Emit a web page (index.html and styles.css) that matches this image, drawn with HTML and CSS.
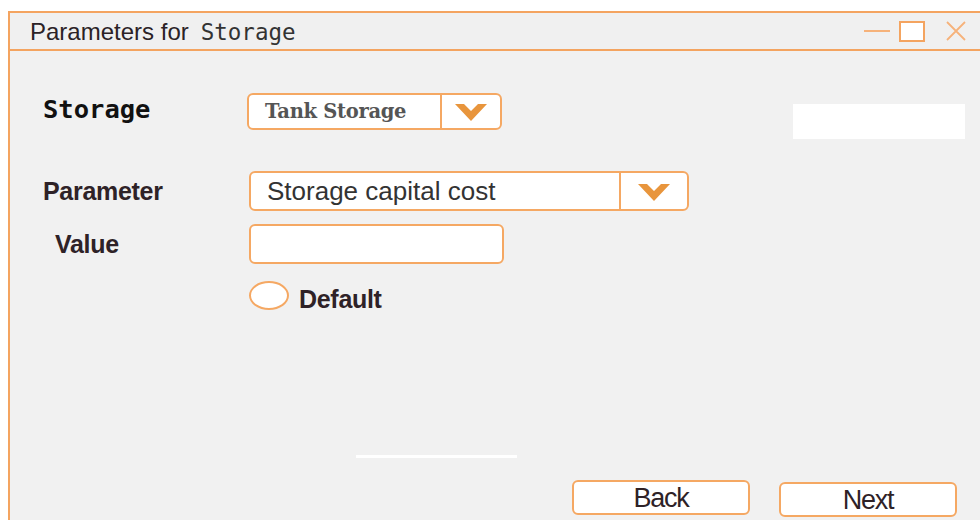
FILE: index.html
```html
<!DOCTYPE html>
<html lang="en">
<head>
<meta charset="utf-8">
<title>Parameters for Storage</title>
<link rel="stylesheet" href="styles.css">
</head>
<body>
<div class="window">
  <div class="titlebar">
    <div class="title"><span class="title-sans">Parameters for</span><span class="title-mono">Storage</span></div>
    <div class="controls">
      <span class="ctl-min"></span>
      <span class="ctl-max"></span>
      <svg class="ctl-close" width="20" height="20" viewBox="0 0 20 20">
        <path d="M1 1 L19 19 M19 1 L1 19" stroke="#f6b27a" stroke-width="1.8" fill="none"/>
      </svg>
    </div>
  </div>

  <div class="content">
    <div class="row row-storage">
      <div class="label label-mono">Storage</div>
      <div class="select select-small">
        <div class="select-text serif">Tank Storage</div>
        <div class="select-btn">
          <svg width="32" height="17" viewBox="0 0 32 17"><polygon points="0,0 9,0 16,7 23,0 32,0 16,17" fill="#e8953c"/></svg>
        </div>
      </div>
      <div class="blank-box"></div>
    </div>

    <div class="row row-param">
      <div class="label label-bold">Parameter</div>
      <div class="select select-wide">
        <div class="select-text sans">Storage capital cost</div>
        <div class="select-btn">
          <svg width="32" height="17" viewBox="0 0 32 17"><polygon points="0,0 9,0 16,7 23,0 32,0 16,17" fill="#e8953c"/></svg>
        </div>
      </div>
    </div>

    <div class="row row-value">
      <div class="label label-bold indent">Value</div>
      <div class="input"></div>
    </div>

    <div class="row row-default">
      <div class="label"></div>
      <span class="radio"></span>
      <span class="radio-text">Default</span>
    </div>

    <div class="divider"></div>

    <div class="buttons">
      <button class="btn btn-back">Back</button>
      <button class="btn btn-next">Next</button>
    </div>
  </div>
</div>
</body>
</html>
```
FILE: styles.css
```css
html, body {
  margin: 0;
  padding: 0;
  background: #ffffff;
  overflow: hidden;
}

.window {
  margin: 11px 0 0 8px;
  height: 520px;
  border-top: 2px solid #f4a460;
  border-left: 2px solid #f4a460;
  background: #f1f1f1;
  font-family: "Liberation Sans", Arial, sans-serif;
}

/* title bar */
.titlebar {
  height: 36px;
  background: #f0f0f0;
  border-bottom: 2px solid #f4a460;
  display: flex;
  align-items: center;
  justify-content: space-between;
}
.title {
  padding-left: 20px;
  color: #2b2226;
  white-space: nowrap;
  margin-top: 1px;
}
.title-sans {
  font-family: "Liberation Sans", Arial, sans-serif;
  font-size: 24px;
}
.title-mono {
  font-family: "DejaVu Sans Mono", monospace;
  font-size: 22.5px;
  color: #333333;
  margin-left: 12px;
}
.controls {
  display: flex;
  align-items: center;
  padding-right: 14px;
}
.ctl-min {
  width: 26px;
  height: 2px;
  background: #f6b27a;
  margin-right: 9px;
  margin-top: -1px;
}
.ctl-max {
  width: 22px;
  height: 17px;
  border: 2px solid #f4a460;
  background: #ffffff;
  margin-right: 21px;
}
.ctl-close {
  display: block;
}

/* form body */
.content {
  padding-left: 33px;
}
.row {
  display: flex;
  align-items: center;
}
.label {
  width: 204px;
  flex: none;
  color: #2e2227;
}
.label-mono {
  font-family: "DejaVu Sans Mono", monospace;
  font-weight: bold;
  font-size: 25.5px;
  color: #111111;
  margin-top: -5px;
}
.label-bold {
  font-family: "Liberation Sans", Arial, sans-serif;
  font-weight: bold;
  font-size: 25px;
  letter-spacing: -0.3px;
}
.indent {
  padding-left: 12px;
  box-sizing: border-box;
}

.row-storage {
  margin-top: 42px;
  height: 37px;
}
.row-param {
  margin-top: 41px;
  height: 40px;
}
.row-value {
  margin-top: 13px;
  height: 40px;
}
.row-default {
  margin-top: 17px;
  height: 29px;
}

.select {
  display: flex;
  box-sizing: border-box;
  border: 2px solid #f5a863;
  border-radius: 6px;
  background: #ffffff;
}
.select-small {
  width: 255px;
  height: 37px;
}
.select-wide {
  width: 440px;
  height: 40px;
  margin-left: 2px;
}
.select-text {
  flex: 1;
  display: flex;
  align-items: center;
  padding-left: 16px;
  white-space: nowrap;
}
.serif {
  font-family: "DejaVu Serif", serif;
  font-weight: bold;
  font-size: 19.5px;
  color: #555555;
  letter-spacing: -0.3px;
}
.sans {
  font-family: "Liberation Sans", Arial, sans-serif;
  font-size: 26px;
  color: #333333;
}
.select-btn {
  border-left: 2px solid #f5a863;
  display: flex;
  align-items: center;
  justify-content: center;
  padding-top: 2px;
}
.select-small .select-btn { width: 58px; }
.select-wide .select-btn { width: 66px; }

.blank-box {
  align-self: flex-start;
  width: 172px;
  height: 35px;
  background: #ffffff;
  margin: 11px 15px -9px auto;
}

.input {
  width: 255px;
  height: 40px;
  box-sizing: border-box;
  border: 2px solid #f5a863;
  border-radius: 6px;
  background: #ffffff;
  margin-left: 2px;
}

.radio {
  width: 40px;
  height: 29px;
  box-sizing: border-box;
  border: 2px solid #f5a863;
  border-radius: 50%;
  background: #ffffff;
  margin-left: 2px;
}
.radio-text {
  font-family: "Liberation Sans", Arial, sans-serif;
  font-weight: bold;
  font-size: 25px;
  letter-spacing: -0.3px;
  color: #2e2227;
  margin-left: 10px;
  margin-top: 7px;
}

.divider {
  width: 161px;
  height: 3px;
  background: #ffffff;
  margin: 145px 0 0 313px;
}

.buttons {
  display: flex;
  align-items: flex-start;
  margin: 22px 0 0 529px;
  gap: 29px;
}
.btn {
  width: 178px;
  height: 35px;
  box-sizing: border-box;
  border: 2px solid #f5a863;
  border-radius: 6px;
  background: #ffffff;
  font-family: "Liberation Sans", Arial, sans-serif;
  font-size: 27px;
  color: #2e2227;
  padding: 0;
  line-height: 33px;
  letter-spacing: -1.2px;
}
.btn-next {
  margin-top: 2px;
}
```
